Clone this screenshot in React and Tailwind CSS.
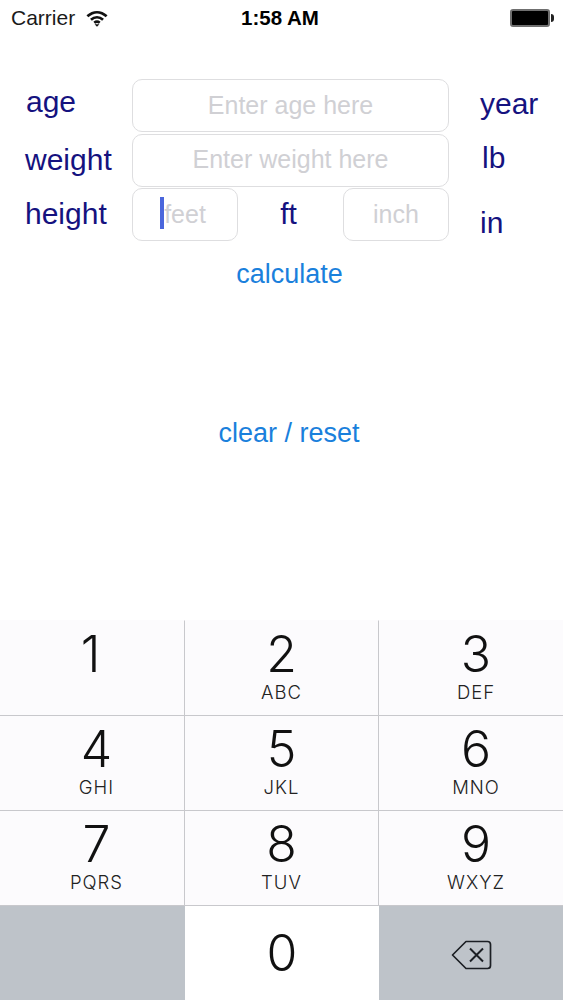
const sans = "font-['Liberation_Sans',Arial,sans-serif]";

const keys = [
  ["1", "", "pr-[3px]"],
  ["2", "ABC", ""],
  ["3", "DEF", "pl-[10px]"],
  ["4", "GHI", "pl-[9px]"],
  ["5", "JKL", ""],
  ["6", "MNO", "pl-[10px]"],
  ["7", "PQRS", "pl-[9px]"],
  ["8", "TUV", ""],
  ["9", "WXYZ", "pl-[10px]"],
];

function Wifi() {
  return (
    <svg width="22" height="17" viewBox="0 0 24 18" fill="none" stroke="#111" strokeWidth="3">
      <path d="M1.5 6.5C8 0.8 16 0.8 22.5 6.5" />
      <path d="M5.4 10.4C9.4 6.8 14.6 6.8 18.6 10.4" />
      <path d="M9 13.6C10.8 12.2 13.2 12.2 15 13.6" />
      <path d="M12 18L9.4 15.2h5.2z" fill="#111" stroke="none" />
    </svg>
  );
}

function Battery() {
  return (
    <div className="flex items-center">
      <div className="w-[40px] h-[18px] rounded-[3px] border-2 border-[#6f6f6f] bg-black" />
      <div className="ml-[1px] w-[3px] h-[8px] rounded-r-full bg-[#222]" />
    </div>
  );
}

function Backspace() {
  return (
    <svg width="41" height="30" viewBox="0 0 41 30" fill="none" stroke="#1c1f24" strokeWidth="1.7" strokeLinejoin="round">
      <path d="M15 1.5H36.5a3 3 0 0 1 3 3V25.5a3 3 0 0 1-3 3H15L1.5 15z" />
      <path d="M19 8.5L32 21.5M32 8.5L19 21.5" strokeWidth="2" />
    </svg>
  );
}

function Field({ placeholder, className }) {
  return (
    <input
      readOnly
      placeholder={placeholder}
      className={`h-full pb-[1px] rounded-[10px] border border-[#dedee0] bg-white text-center text-[25px] outline-none placeholder:text-[#d0d0d4] ${className}`}
    />
  );
}

function Key({ digit, letters, className }) {
  return (
    <div className={`h-[95px] flex flex-col items-center bg-[#fcfbfd] border-t border-r border-[#c8c8cc] nth-[3n]:border-r-0 nth-[-n+3]:border-t-[#fcfbfd] ${className}`}>
      <span className="mt-[8px] text-[50px] leading-[50px] font-light text-[#111] font-['Inter',sans-serif]">{digit}</span>
      <span className="mt-[3px] text-[18.5px] leading-[20px] tracking-[1px] font-light text-[#222] font-['Inter',sans-serif]">{letters}</span>
    </div>
  );
}

export default function App() {
  return (
    <div className={`${sans} w-[563px] h-[1000px] bg-white flex flex-col overflow-hidden`}>
      {/* status bar */}
      <div className="h-[36px] pl-[11px] pr-[9px] grid grid-cols-3 items-center text-[21px] text-[#1a1a1a]">
        <div className="flex items-center gap-[11px]">
          <span>Carrier</span>
          <Wifi />
        </div>
        <div className="text-center font-bold text-[20.5px] text-black pr-[5px]">1:58 AM</div>
        <div className="flex justify-end">
          <Battery />
        </div>
      </div>

      {/* form */}
      <div className="mt-[43px] flex flex-col gap-[1.5px] text-[30px] text-[#15127f]">
        <div className="h-[53px] flex items-center">
          <span className="w-[132px] pl-[26px] mb-[9px]">age</span>
          <Field placeholder="Enter age here" className="w-[317px]" />
          <span className="pl-[31px] mb-[5px]">year</span>
        </div>
        <div className="h-[53px] flex items-center">
          <span className="w-[132px] pl-[25px] mb-[2px]">weight</span>
          <Field placeholder="Enter weight here" className="w-[317px]" />
          <span className="pl-[33px] mb-[6px]">lb</span>
        </div>
        <div className="h-[53px] flex items-center">
          <span className="w-[132px] pl-[25px] mb-[3px]">height</span>
          <div className="relative h-full w-[106px]">
            <Field placeholder="feet" className="w-full" />
            <div className="absolute left-[28px] top-[9px] w-[4px] h-[32px] bg-[#4a66dc]" />
          </div>
          <span className="w-[105px] pr-[4px] text-center mb-[3px]">ft</span>
          <Field placeholder="inch" className="w-[106px]" />
          <span className="pl-[31px] mt-[15px]">in</span>
        </div>
      </div>

      <div className="mt-[13px] pl-[16px] text-center text-[27px] text-[#1a80dc]">calculate</div>
      <div className="mt-[118px] pl-[15px] text-center text-[27px] text-[#1a80dc]">clear / reset</div>

      {/* keypad */}
      <div className="mt-auto grid grid-cols-[185px_194px_184px]">
        {keys.map(([digit, letters, className]) => (
          <Key key={digit} digit={digit} letters={letters} className={className} />
        ))}
        <div className="h-[95px] bg-[#bec3c9] border-t border-[#c8c8cc]" />
        <div className="h-[95px] flex justify-center bg-white border-t border-[#c8c8cc]">
          <span className="mt-[22px] h-[50px] text-[50px] leading-[50px] font-light text-[#111] font-['Inter',sans-serif]">0</span>
        </div>
        <div className="h-[95px] pt-[4px] flex items-center justify-center bg-[#bec3c9] border-t border-[#c8c8cc]">
          <Backspace />
        </div>
      </div>
    </div>
  );
}
